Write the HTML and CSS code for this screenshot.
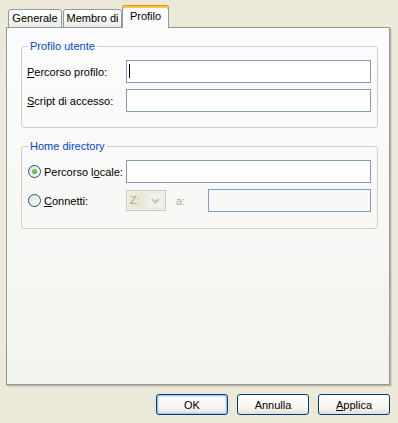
FILE: index.html
```html
<!DOCTYPE html>
<html lang="it">
<head>
<meta charset="utf-8">
<title>Profilo</title>
<link rel="stylesheet" href="styles.css">
</head>
<body>
<div class="dialog">
  <div class="tabs">
    <div class="tab w-gen">Generale</div>
    <div class="tab w-mem">Membro di</div>
    <div class="tab selected w-pro">Profilo</div>
  </div>
  <div class="panel">
    <fieldset class="group g1">
      <legend>Profilo utente</legend>
      <div class="row first">
        <label class="lbl"><u>P</u>ercorso profilo:</label>
        <div class="field"><input class="text" type="text"><span class="caret"></span></div>
      </div>
      <div class="row">
        <label class="lbl"><u>S</u>cript di accesso:</label>
        <div class="field"><input class="text" type="text"></div>
      </div>
    </fieldset>
    <fieldset class="group g2">
      <legend>Home directory</legend>
      <div class="row first">
        <span class="radio checked"></span>
        <label class="rlbl">Percorso l<u>o</u>cale:</label>
        <div class="field"><input class="text" type="text"></div>
      </div>
      <div class="row">
        <span class="radio"></span>
        <label class="rlbl"><u>C</u>onnetti:</label>
        <div class="combo">
          <span class="combo-val">Z:</span>
          <span class="combo-btn"><svg width="9" height="6" viewBox="0 0 9 6"><path d="M1 1 L4.5 4.5 L8 1" fill="none" stroke="#C4C2B8" stroke-width="2"/></svg></span>
        </div>
        <span class="to">a:</span>
        <div class="field"><input class="text disabled" type="text" disabled></div>
      </div>
    </fieldset>
  </div>
  <div class="buttons">
    <button class="btn default">OK</button>
    <button class="btn">Annulla</button>
    <button class="btn"><u>A</u>pplica</button>
  </div>
</div>
</body>
</html>
```

FILE: styles.css
```css
html, body {
  margin: 0;
  padding: 0;
  background: #ECE9D8;
  width: 398px;
  height: 423px;
  overflow: hidden;
}
body {
  font-family: "Liberation Sans", Tahoma, Arial, sans-serif;
  font-size: 11px;
  color: #000;
}
u { text-decoration: underline; text-underline-offset: 1px; }

.dialog {
  padding: 6px 8px 0 6px;
}

.tabs {
  display: flex;
  align-items: flex-end;
  height: 22px;
  margin-bottom: -1px;
  padding-left: 2px;
  position: relative;
  z-index: 1;
}
.tab {
  box-sizing: border-box;
  height: 19px;
  margin-right: 1px;
  border: 1px solid #919B9C;
  border-radius: 3px 3px 0 0;
  background: linear-gradient(#FFFFFF, #F4F4F0 60%, #ECEBE6);
  text-align: center;
  line-height: 17px;
}
.w-gen { width: 54px; }
.w-mem { width: 59px; }
.w-pro { width: 47px; }
.tab.selected {
  height: 23px;
  margin-left: -1px;
  background: #FCFCFE;
  border-top: 1px solid #E68B2C;
  box-shadow: inset 0 2px 0 #FFC83C;
  border-bottom: none;
  line-height: 20px;
}

.panel {
  box-sizing: border-box;
  width: 384px;
  height: 358px;
  border: 1px solid #919B9C;
  box-shadow: 1px 1px 0 #B6B4A6, 2px 2px 0 #D8D5C5;
  background: linear-gradient(#FCFCFE, #F4F3EE);
  padding: 12px 11px 0 14px;
}

.group {
  margin: 0;
  padding: 0 6px 0 0;
  border: 1px solid #D0D0BF;
  border-radius: 3px;
  min-width: 0;
}
.group legend {
  margin-left: 6px;
  padding: 0 2px;
  color: #0046D5;
  line-height: 13px;
}
.g1 { padding-bottom: 15px; }
.g2 { margin-top: 12px; padding-bottom: 16px; }

.row {
  display: flex;
  align-items: center;
  height: 23px;
  margin-top: 6px;
  padding-left: 5px;
}
.row.first { margin-top: 7px; }

.lbl {
  width: 99px;
  flex: none;
}

.field {
  position: relative;
  flex: 1;
  height: 23px;
}
.text {
  box-sizing: border-box;
  display: block;
  width: 100%;
  height: 23px;
  margin: 0;
  border: 1px solid #7F9DB9;
  background: #fff;
  font: inherit;
  padding: 0 3px;
  outline: none;
}
.text.disabled {
  background: transparent;
}
.caret {
  position: absolute;
  left: 3px;
  top: 4px;
  width: 1px;
  height: 14px;
  background: #000;
}

.radio {
  box-sizing: border-box;
  flex: none;
  width: 13px;
  height: 13px;
  margin-left: 1px;
  border: 1px solid #1C5180;
  border-radius: 50%;
  background: linear-gradient(135deg, #DCDBD5, #F4F3EE 55%, #FFFFFF);
  display: flex;
  align-items: center;
  justify-content: center;
}
.radio.checked::after {
  content: "";
  width: 5px;
  height: 5px;
  border-radius: 50%;
  background: radial-gradient(circle at 40% 40%, #6CE36A, #21A121);
}
.rlbl {
  margin-left: 3px;
  width: 82px;
  flex: none;
}

.combo {
  box-sizing: border-box;
  flex: none;
  width: 40px;
  height: 21px;
  border: 1px solid #C9C7BA;
  display: flex;
  padding: 1px;
  gap: 1px;
  background: #F4F3EE;
}
.combo-val {
  flex: 1;
  background: #ECE9D8;
  color: #ACA899;
  line-height: 17px;
  padding-left: 2px;
}
.combo-btn {
  box-sizing: border-box;
  width: 17px;
  border: 1px solid #E6E5DF;
  border-radius: 2px;
  background: #F1F1EC;
  display: flex;
  align-items: center;
  justify-content: center;
}
.to {
  flex: none;
  width: 42px;
  padding-left: 10px;
  box-sizing: border-box;
  color: #ACA899;
}

.buttons {
  display: flex;
  justify-content: flex-end;
  gap: 9px;
  margin-top: 9px;
}
.btn {
  box-sizing: border-box;
  width: 72px;
  height: 21px;
  margin: 0;
  padding: 0;
  border: 1px solid #003C74;
  border-radius: 3px;
  background: linear-gradient(#FFFFFF, #F5F4EF 70%, #E3E0D6);
  font: inherit;
  color: #000;
}
.btn.default {
  box-shadow: inset 0 0 0 1px #A8C5F2, inset 0 0 0 2px #D3E5FB;
}
```
